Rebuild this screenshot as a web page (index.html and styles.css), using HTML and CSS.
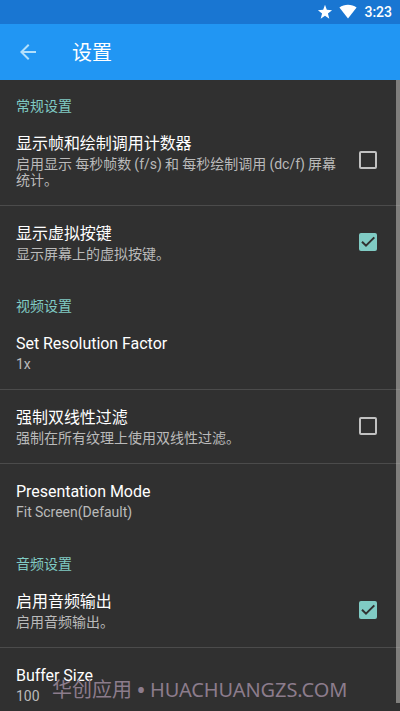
FILE: index.html
```html
<!DOCTYPE html>
<html lang="zh-CN">
<head>
<meta charset="utf-8">
<title>设置</title>
<link rel="stylesheet" href="styles.css">
</head>
<body>
<div class="screen">
  <div class="status">
    <svg class="star" width="16" height="16" viewBox="0 0 24 24"><path fill="#fff" d="M12 17.700l6.500 4.500-2.100-7.900 6.200-5-7.900-.6L12 1.200 9.300 8.700l-7.900.6 6.200 5-2.100 7.900z"/></svg>
    <svg class="wifi" width="18" height="15" viewBox="0 0 18 15"><path fill="#fff" d="M.4 3.600C5.300-.2 12.700-.2 17.600 3.600L9 14.400z"/></svg>
    <span class="time">3:23</span>
  </div>
  <header class="bar">
    <svg class="back" width="24" height="24" viewBox="0 0 24 24"><path fill="#b2e0fc" d="M20 11H7.830l5.590-5.590L12 4l-8 8 8 8 1.410-1.410L7.830 13H20v-2z"/></svg>
    <h1>设置</h1>
  </header>
  <main class="list">
    <h2 class="category first">常规设置</h2>
    <section class="row divided">
      <div class="text"><div class="title">显示帧和绘制调用计数器</div><div class="summary">启用显示 每秒帧数 (f/s) 和 每秒绘制调用 (dc/f) 屏幕统计。</div></div>
      <span class="box"></span>
    </section>
    <section class="row">
      <div class="text"><div class="title">显示虚拟按键</div><div class="summary">显示屏幕上的虚拟按键。</div></div>
      <span class="box checked"><svg width="18" height="18" viewBox="0 0 18 18"><path d="M3 8.700L7 12.700 15.300 4.400" fill="none" stroke="#303030" stroke-width="2"/></svg></span>
    </section>
    <h2 class="category">视频设置</h2>
    <section class="row divided">
      <div class="text"><div class="title">Set Resolution Factor</div><div class="summary">1x</div></div>
    </section>
    <section class="row divided">
      <div class="text"><div class="title">强制双线性过滤</div><div class="summary">强制在所有纹理上使用双线性过滤。</div></div>
      <span class="box"></span>
    </section>
    <section class="row">
      <div class="text"><div class="title">Presentation Mode</div><div class="summary">Fit Screen(Default)</div></div>
    </section>
    <h2 class="category">音频设置</h2>
    <section class="row divided">
      <div class="text"><div class="title">启用音频输出</div><div class="summary">启用音频输出。</div></div>
      <span class="box checked"><svg width="18" height="18" viewBox="0 0 18 18"><path d="M3 8.700L7 12.700 15.300 4.400" fill="none" stroke="#303030" stroke-width="2"/></svg></span>
    </section>
    <section class="row">
      <div class="text"><div class="title">Buffer Size</div><div class="summary">100</div></div>
    </section>
  </main>
  <div class="scrollbar"></div>
  <div class="watermark">华创应用 <span class="dot">•</span> <span class="site">HUACHUANGZS.COM</span></div>
</div>
</body>
</html>
```

FILE: styles.css
```css
* { box-sizing: border-box; }
body {
  margin: 0;
  background: #303030;
  font-family: Roboto, "Noto Sans CJK SC", sans-serif;
}
.screen {
  position: relative;
  width: 400px;
  height: 711px;
  overflow: hidden;
}
.status {
  height: 24px;
  background: #1976d2;
  display: flex;
  align-items: center;
  justify-content: flex-end;
  padding-right: 8px;
  color: #fff;
}
.star { margin-right: 6px; }
.wifi { margin-right: 7px; margin-bottom: 2px; }
.time { font-size: 14px; font-weight: 500; line-height: 24px; }
.bar {
  height: 56px;
  background: #2196f3;
  display: flex;
  align-items: center;
  padding-left: 16px;
}
.bar h1 {
  margin: 2px 0 0 32px;
  font-size: 20px;
  font-weight: 400;
  line-height: 28px;
  color: #fff;
}
.category {
  height: 37px;
  margin: 0;
  padding: 19px 16px 0;
  font-size: 14px;
  font-weight: 400;
  line-height: 16px;
  color: #80cbc4;
}
.category.first { height: 36px; padding-top: 18px; }
.row {
  display: flex;
  align-items: center;
  padding: 16px 23px 17px 16px;
  white-space: nowrap;
}
.divided { border-bottom: 1px solid #4b4b4b; }
.text { width: 328px; }
.title {
  font-size: 16px;
  line-height: 24px;
  height: 24px;
  letter-spacing: -0.04px;
  color: #fff;
}
.summary {
  font-size: 14px;
  line-height: 16px;
  word-spacing: -0.3px;
  color: #bababa;
  white-space: normal;
}
.box {
  flex: none;
  width: 18px;
  height: 18px;
  margin: 0 0 0 auto;
  border: 2px solid #c1c1c1;
  border-radius: 2px;
}
.checked { border: 0; background: #80cbc4; }
.checked svg { display: block; }
.scrollbar {
  position: absolute;
  top: 80px;
  right: 0;
  width: 4px;
  height: 623px;
  background: rgba(206, 203, 200, 0.5);
}
.watermark {
  position: absolute;
  left: 52px;
  top: 676px;
  font-family: "Noto Sans", "Noto Sans CJK SC", sans-serif;
  font-size: 20px;
  line-height: 28px;
  white-space: nowrap;
  color: #8c7c8c;
}
.dot { font-weight: 700; }
.site { letter-spacing: -0.1px; }
```
